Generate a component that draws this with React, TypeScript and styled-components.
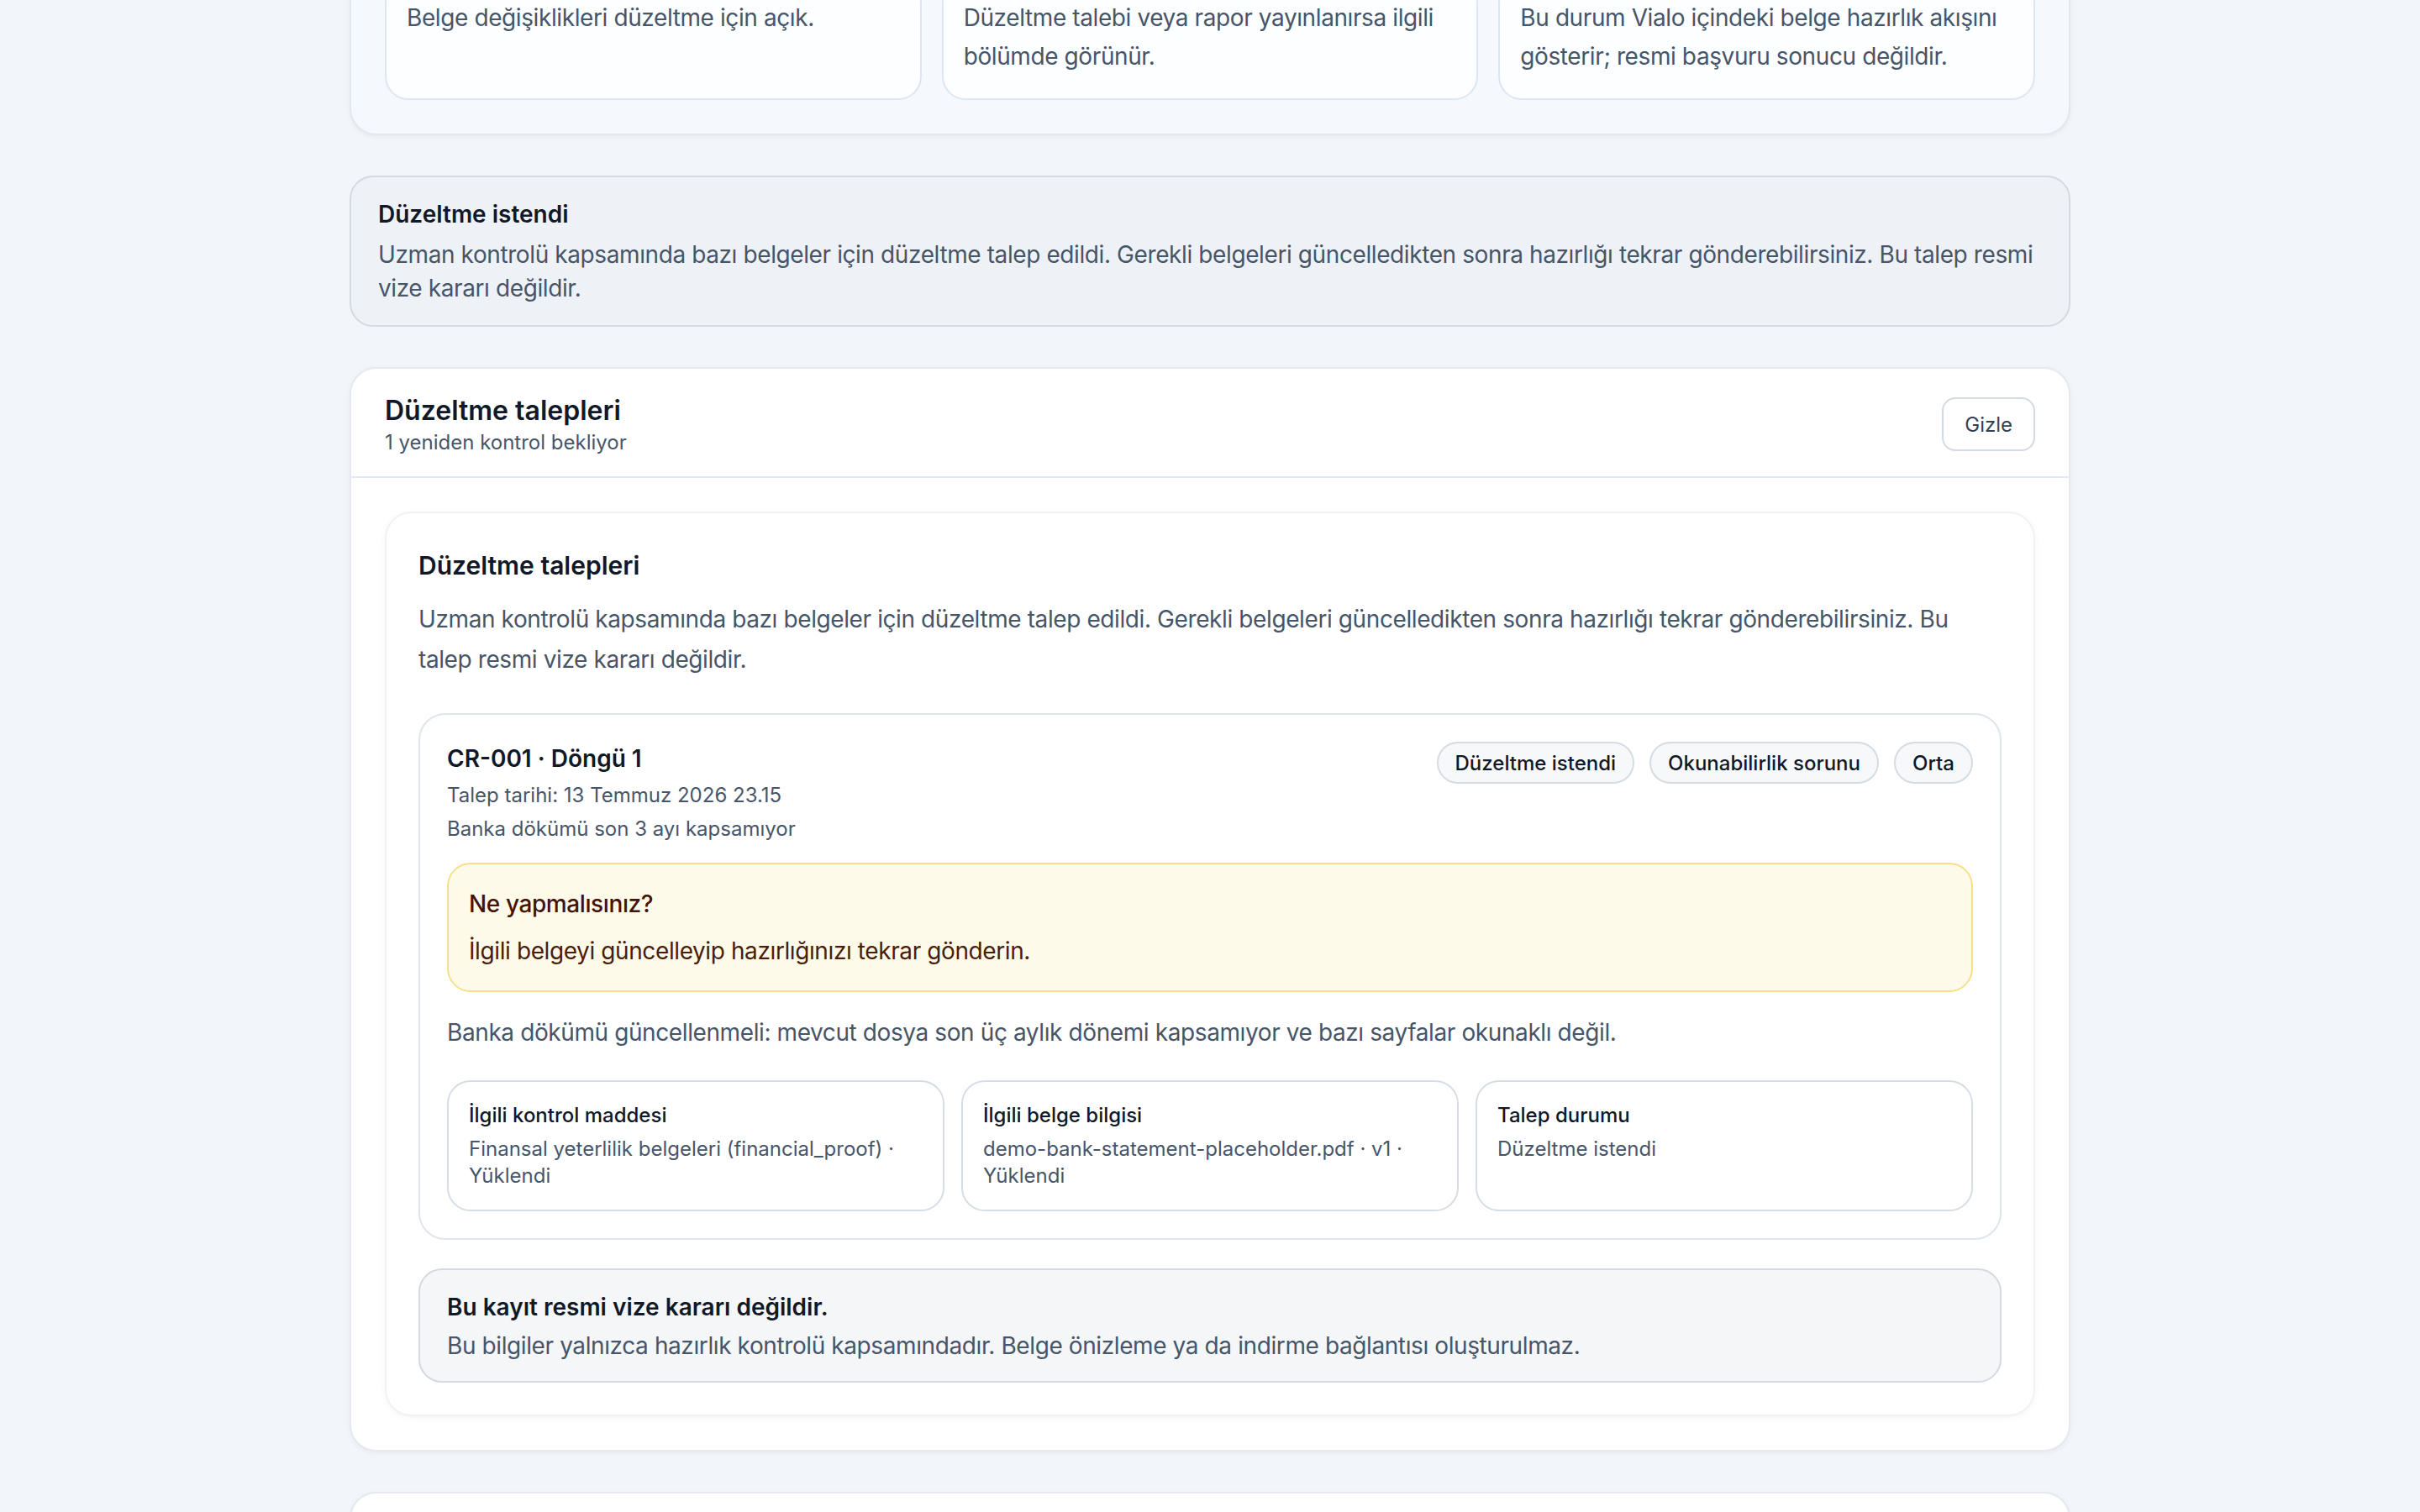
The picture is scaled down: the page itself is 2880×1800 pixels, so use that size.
import styled, { createGlobalStyle } from "styled-components";

const GlobalStyle = createGlobalStyle`
  * { box-sizing: border-box; }
  html, body {
    margin: 0;
    padding: 0;
    background: #f2f5f9;
  }
  body {
    font-family: Inter, "Noto Sans", sans-serif;
    color: #0f172a;
    -webkit-font-smoothing: antialiased;
  }
`;

const color = {
  ink: "#111827",
  muted: "#475569",
  line: "#d6dde6",
  soft: "#e2e8f0",
};

// body copy at 28px runs a touch tighter than Inter's default
const tight = "-0.4px";

const Viewport = styled.div`
  height: 1800px;
  overflow: hidden;
`;

const Page = styled.main`
  width: 2048px;
  margin: 0 auto;
  display: flex;
  flex-direction: column;
  gap: 48px;
`;

/* summary card, scrolled partly out of view */
const SummaryCard = styled.section`
  margin-top: -66px;
  background: #f5f8fc;
  border: 2px solid #e1e8f1;
  border-radius: 32px;
  padding: 40px;
  box-shadow: 0 2px 6px rgba(15, 23, 42, 0.05);
`;

const SummaryGrid = styled.div`
  display: grid;
  grid-template-columns: repeat(3, 1fr);
  gap: 24px;
`;

const SummaryItem = styled.div`
  background: #fdfeff;
  border: 2px solid #dde7f3;
  border-radius: 28px;
  padding: 21px 24px 27px;
  font-size: 28px;
  line-height: 45.5px;
  letter-spacing: ${tight};
  color: ${color.muted};
`;

const Notice = styled.section<{ $tone?: "slate" | "gray" }>`
  background: ${(p) => (p.$tone === "gray" ? "#f4f6f8" : "#eef2f6")};
  border: 2px solid #d3dae3;
  border-radius: 28px;
  padding: ${(p) => (p.$tone === "gray" ? "24px 32px 22px" : "24px 32px")};
`;

const NoticeTitle = styled.div`
  font-size: 28px;
  line-height: 40px;
  font-weight: 600;
  color: ${color.ink};
`;

const NoticeText = styled.p<{ $gap?: number }>`
  margin: ${(p) => p.$gap ?? 8}px 0 0;
  font-size: 28px;
  line-height: 40px;
  letter-spacing: ${tight};
  color: ${color.muted};
`;

const Card = styled.section`
  background: #ffffff;
  border: 2px solid #e6eaf0;
  border-radius: 32px;
  box-shadow: 0 2px 6px rgba(15, 23, 42, 0.05);
`;

const CardHeader = styled.header`
  display: flex;
  align-items: center;
  justify-content: space-between;
  padding: 28px 40px 24px;
  border-bottom: 2px solid ${color.soft};
`;

const HeaderTitle = styled.h2`
  margin: 0;
  font-size: 32px;
  line-height: 44px;
  font-weight: 600;
  color: ${color.ink};
`;

const HeaderSub = styled.div`
  font-size: 24px;
  line-height: 32px;
  color: ${color.muted};
`;

const GhostButton = styled.button`
  height: 64px;
  padding: 0 25px;
  background: #ffffff;
  border: 2px solid #d3dae3;
  border-radius: 16px;
  font-family: inherit;
  font-size: 24px;
  color: #334155;
  cursor: pointer;
`;

const CardBody = styled.div`
  padding: 40px;
`;

const Panel = styled.div`
  background: #ffffff;
  border: 2px solid #f0f2f5;
  border-radius: 32px;
  padding: 38px;
  box-shadow: 0 2px 8px rgba(15, 23, 42, 0.04);
`;

const PanelTitle = styled.h3`
  margin: 0;
  font-size: 30px;
  line-height: 48px;
  font-weight: 600;
  color: ${color.ink};
`;

const PanelText = styled.p`
  margin: 16px 0 0;
  font-size: 28px;
  line-height: 48px;
  letter-spacing: ${tight};
  color: ${color.muted};
`;

const RequestCard = styled.article`
  margin-top: 40px;
  border: 2px solid #dfe5ec;
  border-radius: 32px;
  padding: 32px;
`;

const RequestTop = styled.div`
  display: flex;
  justify-content: space-between;
  align-items: flex-start;
  gap: 24px;
`;

const RequestTitle = styled.div`
  font-size: 28px;
  line-height: 40px;
  font-weight: 600;
  color: ${color.ink};
`;

const Meta = styled.div`
  margin-top: 8px;
  font-size: 24px;
  line-height: 32px;
  color: ${color.muted};
`;

const Badges = styled.div`
  display: flex;
  gap: 18px;
`;

const Badge = styled.span`
  display: inline-flex;
  align-items: center;
  height: 50px;
  padding: 0 20px;
  border: 2px solid #d5dce4;
  border-radius: 999px;
  background: #f6f8fa;
  font-size: 24px;
  font-weight: 500;
  color: ${color.ink};
  white-space: nowrap;
`;

const Callout = styled.div`
  margin-top: 24px;
  background: #fefae9;
  border: 2px solid #f7e08a;
  border-radius: 28px;
  padding: 27px 24px;
`;

const CalloutTitle = styled.div`
  font-size: 28px;
  line-height: 40px;
  font-weight: 500;
  letter-spacing: ${tight};
  color: #431407;
`;

const CalloutText = styled.div`
  margin-top: 16px;
  font-size: 28px;
  line-height: 40px;
  letter-spacing: ${tight};
  color: #4a1d0a;
`;

const Explain = styled.p`
  margin: 24px 0 0;
  font-size: 28px;
  line-height: 48px;
  letter-spacing: ${tight};
  color: ${color.muted};
`;

const InfoGrid = styled.div`
  margin-top: 33px;
  display: grid;
  grid-template-columns: repeat(3, 1fr);
  gap: 20px;
`;

const InfoBox = styled.div`
  border: 2px solid ${color.line};
  border-radius: 28px;
  padding: 24px;
`;

const InfoLabel = styled.div`
  font-size: 24px;
  line-height: 32px;
  font-weight: 500;
  color: ${color.ink};
`;

const InfoValue = styled.div`
  margin-top: 8px;
  font-size: 24px;
  line-height: 32px;
  color: ${color.muted};
`;

const Disclaimer = styled(Notice)`
  margin-top: 34px;
`;

const NextCard = styled(Card)`
  height: 240px;
`;

const summary = [
  "Belge değişiklikleri düzeltme için açık.",
  "Düzeltme talebi veya rapor yayınlanırsa ilgili bölümde görünür.",
  "Bu durum Vialo içindeki belge hazırlık akışını gösterir; resmi başvuru sonucu değildir.",
];

const related = [
  {
    label: "İlgili kontrol maddesi",
    value: "Finansal yeterlilik belgeleri (financial_proof) · Yüklendi",
  },
  {
    label: "İlgili belge bilgisi",
    value: "demo-bank-statement-placeholder.pdf · v1 · Yüklendi",
  },
  { label: "Talep durumu", value: "Düzeltme istendi" },
];

const intro =
  "Uzman kontrolü kapsamında bazı belgeler için düzeltme talep edildi. Gerekli belgeleri güncelledikten sonra hazırlığı tekrar gönderebilirsiniz. Bu talep resmi vize kararı değildir.";

export default function App() {
  return (
    <Viewport>
      <GlobalStyle />
      <Page>
        <SummaryCard>
          <SummaryGrid>
            {summary.map((text) => (
              <SummaryItem key={text}>{text}</SummaryItem>
            ))}
          </SummaryGrid>
        </SummaryCard>

        <Notice>
          <NoticeTitle>Düzeltme istendi</NoticeTitle>
          <NoticeText>{intro}</NoticeText>
        </Notice>

        <Card>
          <CardHeader>
            <div>
              <HeaderTitle>Düzeltme talepleri</HeaderTitle>
              <HeaderSub>1 yeniden kontrol bekliyor</HeaderSub>
            </div>
            <GhostButton type="button">Gizle</GhostButton>
          </CardHeader>
          <CardBody>
            <Panel>
              <PanelTitle>Düzeltme talepleri</PanelTitle>
              <PanelText>{intro}</PanelText>

              <RequestCard>
                <RequestTop>
                  <div>
                    <RequestTitle>CR-001 · Döngü 1</RequestTitle>
                    <Meta>Talep tarihi: 13 Temmuz 2026 23.15</Meta>
                    <Meta>Banka dökümü son 3 ayı kapsamıyor</Meta>
                  </div>
                  <Badges>
                    <Badge>Düzeltme istendi</Badge>
                    <Badge>Okunabilirlik sorunu</Badge>
                    <Badge>Orta</Badge>
                  </Badges>
                </RequestTop>

                <Callout>
                  <CalloutTitle>Ne yapmalısınız?</CalloutTitle>
                  <CalloutText>İlgili belgeyi güncelleyip hazırlığınızı tekrar gönderin.</CalloutText>
                </Callout>

                <Explain>
                  Banka dökümü güncellenmeli: mevcut dosya son üç aylık dönemi kapsamıyor ve bazı
                  sayfalar okunaklı değil.
                </Explain>

                <InfoGrid>
                  {related.map((item) => (
                    <InfoBox key={item.label}>
                      <InfoLabel>{item.label}</InfoLabel>
                      <InfoValue>{item.value}</InfoValue>
                    </InfoBox>
                  ))}
                </InfoGrid>
              </RequestCard>

              <Disclaimer $tone="gray">
                <NoticeTitle>Bu kayıt resmi vize kararı değildir.</NoticeTitle>
                <NoticeText $gap={6}>
                  Bu bilgiler yalnızca hazırlık kontrolü kapsamındadır. Belge önizleme ya da indirme
                  bağlantısı oluşturulmaz.
                </NoticeText>
              </Disclaimer>
            </Panel>
          </CardBody>
        </Card>

        <NextCard />
      </Page>
    </Viewport>
  );
}
